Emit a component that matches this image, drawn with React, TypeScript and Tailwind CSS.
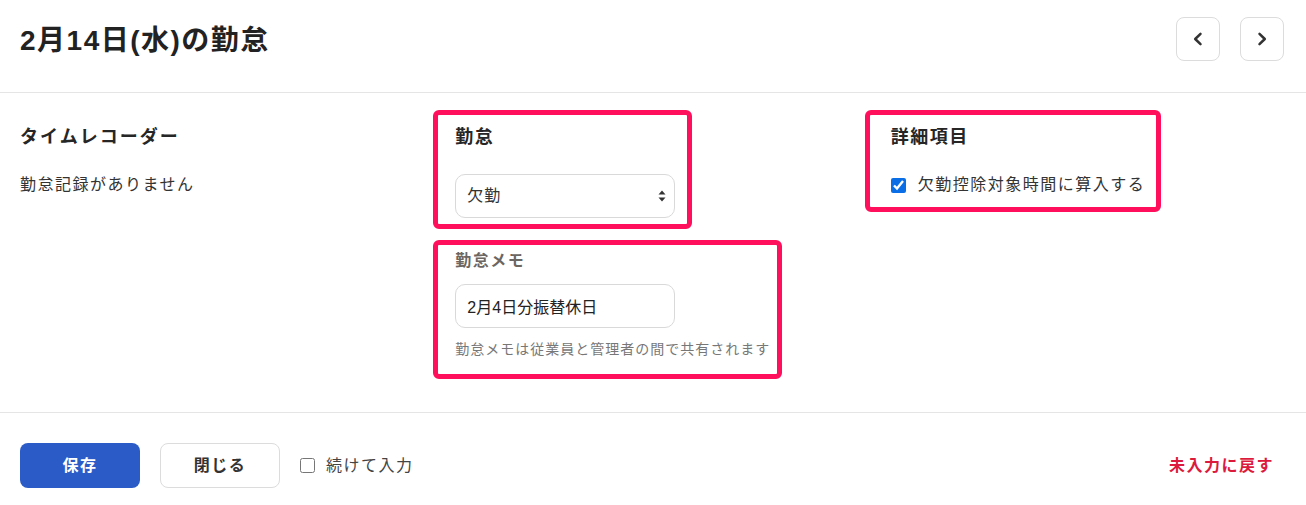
import { useState } from 'react'

const font = { fontFamily: '"Liberation Sans", "Noto Sans CJK JP", sans-serif' }

function ChevronLeft() {
  return (
    <svg width="14" height="14" viewBox="0 0 14 14" fill="none">
      <path d="M9.5 1.8 4.2 7l5.3 5.2" stroke="#333" strokeWidth="2.5" strokeLinecap="round" strokeLinejoin="round" />
    </svg>
  )
}

function ChevronRight() {
  return (
    <svg width="14" height="14" viewBox="0 0 14 14" fill="none">
      <path d="M4.5 1.8 9.8 7l-5.3 5.2" stroke="#333" strokeWidth="2.5" strokeLinecap="round" strokeLinejoin="round" />
    </svg>
  )
}

export default function App() {
  const [status, setStatus] = useState('欠勤')
  const [memo, setMemo] = useState('2月4日分振替休日')
  const [deduct, setDeduct] = useState(true)
  const [continueInput, setContinueInput] = useState(false)

  return (
    <div className="w-[1306px] h-[505px] bg-white text-[#262626] tracking-[1.5px]" style={font}>
      {/* header */}
      <div className="flex items-center justify-between pl-5 pr-[22px] pt-[17px] pb-[31px] border-b border-[#e5e5e5]">
        <h1 className="text-[28px] font-bold leading-none text-[#222] mt-[3px]">2月14日(水)の勤怠</h1>
        <div className="flex gap-5">
          <button className="w-11 h-11 flex items-center justify-center rounded-lg border border-[#dcdcdc] bg-white">
            <ChevronLeft />
          </button>
          <button className="w-11 h-11 flex items-center justify-center rounded-lg border border-[#dcdcdc] bg-white">
            <ChevronRight />
          </button>
        </div>
      </div>

      {/* body */}
      <div className="grid grid-cols-3 gap-10 px-5 pt-[30px] pb-[53px] border-b border-[#e5e5e5]">
        <div>
          <h2 className="text-lg font-bold leading-7 tracking-[2px]">タイムレコーダー</h2>
          <p className="mt-[22px] text-base leading-6 text-[#333]">勤怠記録がありません</p>
        </div>

        <div>
          <div className="relative w-[220px]">
            <div className="absolute -left-[22px] -top-[13px] w-[259px] h-[119px] border-[5px] border-[#ff0f5c] rounded-[6px] pointer-events-none" />
            <h2 className="text-lg font-bold leading-7">勤怠</h2>
            <div className="relative mt-[23px]">
              <select
                value={status}
                onChange={(e) => setStatus(e.target.value)}
                className="appearance-none w-[220px] h-11 pl-[11px] pr-8 rounded-[10px] border border-[#d9d9d9] bg-white text-base text-[#333] tracking-[1px] outline-none"
                style={font}
              >
                <option>出勤</option>
                <option>欠勤</option>
                <option>有休</option>
              </select>
              <svg className="absolute right-[9px] top-[16px]" width="8" height="12" viewBox="0 0 8 12">
                <path d="M4 0.5 7.5 4.5H0.5Z" fill="#333" />
                <path d="M4 11.5 7.5 7.5H0.5Z" fill="#333" />
              </svg>
            </div>
          </div>

          <div className="relative w-[220px] mt-[31px]">
            <div className="absolute -left-[22px] -top-[9px] w-[349px] h-[139px] border-[5px] border-[#ff0f5c] rounded-[6px] pointer-events-none" />
            <label className="block text-base font-bold leading-6 text-[#6b6662]">勤怠メモ</label>
            <input
              value={memo}
              onChange={(e) => setMemo(e.target.value)}
              className="mt-[11px] w-[220px] h-11 px-[11px] rounded-[10px] border border-[#d9d9d9] text-base text-[#222] tracking-normal outline-none"
              style={font}
            />
            <p className="mt-[11px] text-sm leading-5 text-[#777] tracking-[1px] whitespace-nowrap">勤怠メモは従業員と管理者の間で共有されます</p>
          </div>
        </div>

        <div>
          <div className="relative">
            <div className="absolute -left-[26px] -top-[13px] w-[296px] h-[102px] border-[5px] border-[#ff0f5c] rounded-[6px] pointer-events-none" />
            <h2 className="text-lg font-bold leading-7">詳細項目</h2>
            <label className="mt-[22px] flex items-center gap-3 text-base leading-6 text-[#333]">
              <input
                type="checkbox"
                checked={deduct}
                onChange={(e) => setDeduct(e.target.checked)}
                className="w-[15px] h-[15px] m-0 accent-[#0a6fe6]"
              />
              欠勤控除対象時間に算入する
            </label>
          </div>
        </div>
      </div>

      {/* footer */}
      <div className="flex items-center px-5 pt-[30px] pb-[17px]">
        <button className="w-[120px] h-[45px] rounded-lg bg-[#2a5bc7] text-white text-base font-bold">保存</button>
        <button className="ml-5 w-[120px] h-[45px] rounded-lg border border-[#dcdcdc] bg-white text-base font-bold text-[#333]">閉じる</button>
        <label className="ml-5 flex items-center gap-[11px] text-base text-[#444]">
          <input
            type="checkbox"
            checked={continueInput}
            onChange={(e) => setContinueInput(e.target.checked)}
            className="w-[15px] h-[15px] m-0 accent-[#0a6fe6]"
          />
          続けて入力
        </label>
        <button className="ml-auto mr-[12px] text-base font-bold text-[#dc1a3e] tracking-[1.5px]">未入力に戻す</button>
      </div>
    </div>
  )
}
